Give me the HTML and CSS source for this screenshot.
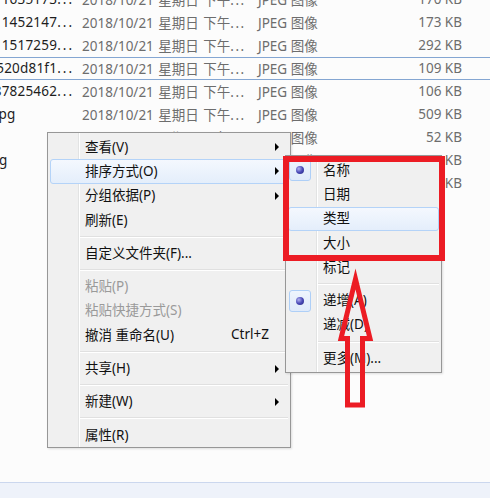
FILE: index.html
```html
<!DOCTYPE html>
<html lang="zh-CN">
<head>
  <meta charset="UTF-8">
  <title>排序方式</title>
  <link rel="stylesheet" href="styles.css">
</head>
<body>
  <div class="files">
    <div class="row"><div class="name cut"><span>1635173<i>...</i></span></div><div class="date">2018/10/21 星期日 下午<i>...</i></div><div class="type">JPEG 图像</div><div class="size">170 KB</div></div>
    <div class="row"><div class="name cut"><span>1452147<i>...</i></span></div><div class="date">2018/10/21 星期日 下午<i>...</i></div><div class="type">JPEG 图像</div><div class="size">173 KB</div></div>
    <div class="row"><div class="name cut"><span>1517259<i>...</i></span></div><div class="date">2018/10/21 星期日 下午<i>...</i></div><div class="type">JPEG 图像</div><div class="size">292 KB</div></div>
    <div class="row selected"><div class="name cut"><span>520d81f1<i>...</i></span></div><div class="date">2018/10/21 星期日 下午<i>...</i></div><div class="type">JPEG 图像</div><div class="size">109 KB</div></div>
    <div class="row"><div class="name cut"><span>87825462<i>...</i></span></div><div class="date">2018/10/21 星期日 下午<i>...</i></div><div class="type">JPEG 图像</div><div class="size">106 KB</div></div>
    <div class="row"><div class="name"><span class="tail">.jpg</span></div><div class="date">2018/10/21 星期日 下午<i>...</i></div><div class="type">JPEG 图像</div><div class="size">509 KB</div></div>
    <div class="row"><div class="name"></div><div class="date">2018/10/21 星期日 下午<i>...</i></div><div class="type">JPEG 图像</div><div class="size">52 KB</div></div>
    <div class="row"><div class="name"><span class="tail far">.jpg</span></div><div class="date">2018/10/21 星期日 下午<i>...</i></div><div class="type">JPEG 图像</div><div class="size">63 KB</div></div>
    <div class="row"><div class="name"></div><div class="date">2018/10/21 星期日 下午<i>...</i></div><div class="type">JPEG 图像</div><div class="size">185 KB</div></div>
  </div>
  <div class="spacer"></div>
  <div class="statusbar"></div>

  <!-- right-click menu -->
  <div class="menu main-menu">
    <div class="item"><span class="mark"></span>查看(V)<span class="arrow"></span></div>
    <div class="item hover"><span class="mark"></span>排序方式(O)<span class="arrow"></span></div>
    <div class="item"><span class="mark"></span>分组依据(P)<span class="arrow"></span></div>
    <div class="item"><span class="mark"></span>刷新(E)</div>
    <div class="sep"></div>
    <div class="item"><span class="mark"></span>自定义文件夹(F)...</div>
    <div class="sep"></div>
    <div class="item disabled"><span class="mark"></span>粘贴(P)</div>
    <div class="item disabled"><span class="mark"></span>粘贴快捷方式(S)</div>
    <div class="item"><span class="mark"></span>撤消 重命名(U)<span class="shortcut">Ctrl+Z</span></div>
    <div class="sep"></div>
    <div class="item"><span class="mark"></span>共享(H)<span class="arrow"></span></div>
    <div class="sep"></div>
    <div class="item"><span class="mark"></span>新建(W)<span class="arrow"></span></div>
    <div class="sep"></div>
    <div class="item"><span class="mark"></span>属性(R)</div>
  </div>

  <div class="menu sub-menu">
    <div class="item"><span class="mark checked"><span class="dot"></span></span>名称</div>
    <div class="item"><span class="mark"></span>日期</div>
    <div class="item hover"><span class="mark"></span>类型</div>
    <div class="item"><span class="mark"></span>大小</div>
    <div class="item"><span class="mark"></span>标记</div>
    <div class="sep"></div>
    <div class="item"><span class="mark checked"><span class="dot"></span></span>递增(A)</div>
    <div class="item"><span class="mark"></span>递减(D)</div>
    <div class="sep"></div>
    <div class="item"><span class="mark"></span>更多(M)...</div>
  </div>

  <!-- annotation -->
  <div class="red-box"></div>
  <svg class="red-arrow" width="60" height="160" viewBox="0 0 60 160">
    <polygon points="25.5,19 40,78.5 32.5,78.5 32.5,145 17.5,145 17.5,78.5 11,78.5" fill="none" stroke="#ec1c24" stroke-width="5" stroke-miterlimit="10"/>
  </svg>
</body>
</html>
```

FILE: styles.css
```css
body {
  margin: 0;
  width: 490px;
  height: 498px;
  overflow: hidden;
  position: relative;
  display: flex;
  flex-direction: column;
  background: #fcfcfc;
  font-family: "Noto Sans", "Noto Sans CJK SC", sans-serif;
  font-size: 13.5px;
  color: #111;
}
.files {
  margin-top: -12px;
}
.files i {
  font-style: normal;
  letter-spacing: 2px;
}
.row {
  height: 23px;
  box-sizing: border-box;
  display: flex;
  align-items: center;
  padding-right: 28px;
  padding-bottom: 1px;
  white-space: nowrap;
  color: #6d6d6d;
}
.row.selected {
  border-top: 1px solid #84a6d2;
  border-bottom: 1px solid #84a6d2;
}
.name {
  width: 74px;
  margin-right: 8px;
  overflow: hidden;
  display: flex;
  color: #1e1e1e;
}
.name span {
  flex-shrink: 0;
  letter-spacing: 0.2px;
}
.name.cut {
  justify-content: flex-end;
}
.tail {
  margin-left: -9px;
}
.tail.far {
  margin-left: -17px;
}
.date {
  width: 176px;
  word-spacing: 1px;
}
.date i {
  letter-spacing: 1.5px;
}
.type {
  flex: 1;
}
.size {
  width: 60px;
  text-align: right;
}
.spacer {
  flex: 1;
}
.statusbar {
  height: 15px;
  border-top: 1px solid #cbd7ee;
  background: #eef2fa;
}

.menu {
  position: absolute;
  box-sizing: border-box;
  border: 1px solid #979797;
  padding: 2px 2px 1px;
  background: linear-gradient(to right, #f0f0f0 30px, #e2e3e3 30px, #e2e3e3 31px, #fff 31px, #fff 32px, #f0f0f0 32px);
  box-shadow: 1px 1px 2px rgba(0, 0, 0, 0.12);
}
.main-menu {
  left: 47px;
  top: 132px;
  width: 244px;
  height: 316px;
}
.sub-menu {
  left: 285px;
  top: 155px;
  width: 157px;
  height: 218px;
}
.item {
  height: 24.3px;
  box-sizing: border-box;
  display: flex;
  align-items: center;
  padding-bottom: 3px;
  white-space: nowrap;
  border: 1px solid transparent;
  border-radius: 3px;
}
.item.hover {
  border-color: #b4d3f8;
  background: linear-gradient(#f4f8fe, #e4eefb);
}
.item.disabled {
  color: #9a9a9a;
}
.mark {
  width: 22px;
  height: 22px;
  box-sizing: border-box;
  margin-right: 12px;
  margin-bottom: -3px;
  flex-shrink: 0;
  display: flex;
  align-items: center;
  justify-content: center;
}
.mark.checked {
  border: 1px solid #aecff7;
  border-radius: 3px;
  background: linear-gradient(#eef5fd, #dfeafa);
}
.dot {
  width: 8px;
  height: 8px;
  border-radius: 50%;
  background: radial-gradient(circle at 35% 35%, #b4b4f0 0, #4a4ab8 50%, #26267a 100%);
}
.arrow {
  margin-left: auto;
  margin-right: 8px;
  margin-bottom: -3px;
  width: 0;
  height: 0;
  border-left: 4px solid #000;
  border-top: 4px solid transparent;
  border-bottom: 4px solid transparent;
}
.shortcut {
  margin-left: auto;
  margin-right: 18px;
}
.sep {
  height: 9px;
  display: flex;
  align-items: center;
  padding-left: 30px;
}
.sep::after {
  content: "";
  flex: 1;
  height: 1px;
  background: #e0e0e0;
  border-bottom: 1px solid #fff;
}

.red-box {
  position: absolute;
  left: 283px;
  top: 156px;
  width: 162px;
  height: 105px;
  box-sizing: border-box;
  border: 6px solid #ec1c24;
}
.red-arrow {
  position: absolute;
  left: 330px;
  top: 260px;
}
```
